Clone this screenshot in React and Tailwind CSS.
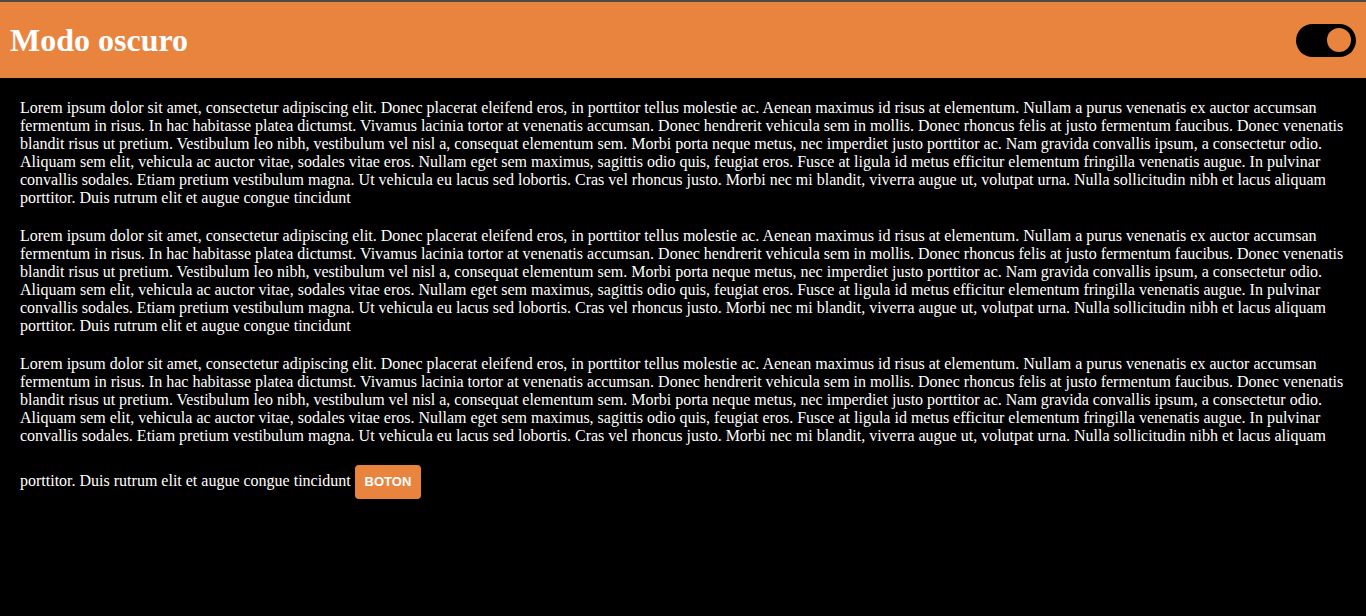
import React, { useState } from 'react';

const LOREM =
  'Lorem ipsum dolor sit amet, consectetur adipiscing elit. Donec placerat eleifend eros, in porttitor tellus molestie ac. Aenean maximus id risus at elementum. Nullam a purus venenatis ex auctor accumsan fermentum in risus. In hac habitasse platea dictumst. Vivamus lacinia tortor at venenatis accumsan. Donec hendrerit vehicula sem in mollis. Donec rhoncus felis at justo fermentum faucibus. Donec venenatis blandit risus ut pretium. Vestibulum leo nibh, vestibulum vel nisl a, consequat elementum sem. Morbi porta neque metus, nec imperdiet justo porttitor ac. Nam gravida convallis ipsum, a consectetur odio. Aliquam sem elit, vehicula ac auctor vitae, sodales vitae eros. Nullam eget sem maximus, sagittis odio quis, feugiat eros. Fusce at ligula id metus efficitur elementum fringilla venenatis augue. In pulvinar convallis sodales. Etiam pretium vestibulum magna. Ut vehicula eu lacus sed lobortis. Cras vel rhoncus justo. Morbi nec mi blandit, viverra augue ut, volutpat urna. Nulla sollicitudin nibh et lacus aliquam porttitor. Duis rutrum elit et augue congue tincidunt';

const App = () => {
  const [dark, setDark] = useState(true);

  return (
    <div className="min-h-[616px] bg-black font-['Liberation_Serif',serif] text-white">
      {/* Header */}
      <header className="flex h-[78px] items-center justify-between border-t-2 border-[#4b4b4b] bg-[#e9843f] px-[10px]">
        <h1 className="text-[32px] font-bold leading-[37px] text-white">Modo oscuro</h1>
        <button
          onClick={() => setDark(!dark)}
          className={`flex h-[33px] w-[60px] items-center rounded-full bg-black px-[5px] ${dark ? 'justify-end' : 'justify-start'}`}
        >
          <span className="h-[24px] w-[24px] rounded-full bg-[#e9843f]"></span>
        </button>
      </header>

      {/* Content */}
      <main className="px-5 pt-[21px] text-[16px] leading-[18px]">
        <p className="mb-5">{LOREM}</p>
        <p className="mb-5">{LOREM}</p>
        <p>
          {LOREM}{' '}
          <button className="mt-5 inline-block rounded-[4px] bg-[#e9843f] px-[10px] py-[9px] align-baseline font-['Liberation_Sans',sans-serif] text-[13px] font-bold leading-[16px] text-white">
            BOTON
          </button>
        </p>
      </main>
    </div>
  );
};

export default App;
